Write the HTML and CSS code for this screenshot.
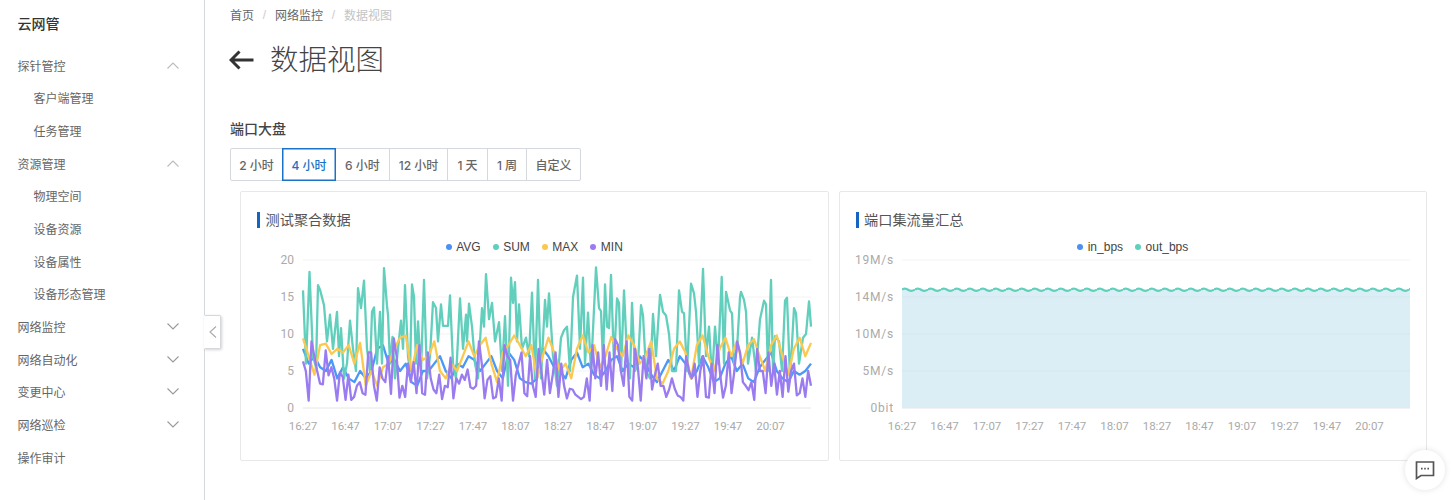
FILE: index.html
```html
<!DOCTYPE html>
<html lang="zh">
<head>
<meta charset="utf-8">
<title>数据视图</title>
<link rel="stylesheet" href="styles.css">
</head>
<body>
<div class="app">
  <aside class="sidebar">
    <div class="brand">云网管</div>
    <nav class="menu">
      <div class="row">探针管控<svg class="chev up" viewBox="0 0 12 7"><path d="M.5 6.5 6 1l5.500 5.500"/></svg></div>
      <div class="row sub">客户端管理</div>
      <div class="row sub">任务管理</div>
      <div class="row">资源管理<svg class="chev up" viewBox="0 0 12 7"><path d="M.5 6.5 6 1l5.500 5.500"/></svg></div>
      <div class="row sub">物理空间</div>
      <div class="row sub">设备资源</div>
      <div class="row sub">设备属性</div>
      <div class="row sub">设备形态管理</div>
      <div class="row">网络监控<svg class="chev" viewBox="0 0 12 7"><path d="M.5.5 6 6l5.500-5.500"/></svg></div>
      <div class="row">网络自动化<svg class="chev" viewBox="0 0 12 7"><path d="M.5.5 6 6l5.500-5.500"/></svg></div>
      <div class="row">变更中心<svg class="chev" viewBox="0 0 12 7"><path d="M.5.5 6 6l5.500-5.500"/></svg></div>
      <div class="row">网络巡检<svg class="chev" viewBox="0 0 12 7"><path d="M.5.5 6 6l5.500-5.500"/></svg></div>
      <div class="row">操作审计</div>
    </nav>
    <div class="collapse"><svg viewBox="0 0 8 12"><path d="M7 .5 1 6l6 5.500"/></svg></div>
  </aside>
  <main class="main">
    <div class="crumbs"><span>首页</span><i>/</i><span>网络监控</span><i>/</i><span class="cur">数据视图</span></div>
    <div class="head">
      <svg class="back" viewBox="0 0 26 20"><path d="M24.500 10H2M10.500 1.500 2 10l8.500 8.500"/></svg>
      <h1>数据视图</h1>
    </div>
    <h2 class="section">端口大盘</h2>
    <div class="btns">
      <button>2 小时</button><button class="on">4 小时</button><button>6 小时</button><button>12 小时</button><button>1 天</button><button>1 周</button><button>自定义</button>
    </div>
    <div class="cards">
      <section class="card">
        <h3 class="card-title">测试聚合数据</h3>
        <div class="legend">
          <span class="lg"><b class="dot blue"></b>AVG</span>
          <span class="lg"><b class="dot teal"></b>SUM</span>
          <span class="lg"><b class="dot gold"></b>MAX</span>
          <span class="lg"><b class="dot violet"></b>MIN</span>
        </div>
        <svg class="chart" viewBox="0 0 586 190">
          <g class="grid"><path d="M62 7H570M62 44H570M62 81H570M62 118H570"/></g>
          <path class="axis" d="M62 155H570"/>
          <g class="ylab">
            <text x="53" y="11">20</text><text x="53" y="48">15</text><text x="53" y="85">10</text><text x="53" y="122">5</text><text x="53" y="159">0</text>
          </g>
          <g class="xlab">
            <text x="62" y="177">16:27</text><text x="104.500" y="177">16:47</text><text x="147" y="177">17:07</text><text x="189.500" y="177">17:27</text><text x="232" y="177">17:47</text><text x="274.500" y="177">18:07</text><text x="317" y="177">18:27</text><text x="359.500" y="177">18:47</text><text x="402" y="177">19:07</text><text x="444.500" y="177">19:27</text><text x="487" y="177">19:47</text><text x="529.500" y="177">20:07</text>
          </g>
          <g transform="translate(62 155) scale(5.708 -7.4)">
            <polyline class="ln l-blue" points="0,8 1,6 2,7 3,5.500 4,5 5,6.500 6,4 7,5.500 8,4 9,3.500 10,5 11,4 12,5 13,8 14,8.500 15,6 16,6.500 17,5 18,6 19,3.500 20,3 21,5 22,5 23,6 24,7 25,5 26,4 27,6 28,5.500 29,7 30,6.500 31,5 32,6 33,7 34,5 35,4 36,7.500 37,6.500 38,4 39,3.500 40,3.300 41,4 42,8 43,7 44,5.500 45,5 46,4 47,6.500 48,7.500 49,5.500 50,6 51,4.500 52,4 53,5 54,6.500 55,7 56,5 57,6 58,5.500 59,7 60,6 61,4.500 62,3.500 63,5 64,6.500 65,5 66,7 67,6 68,4 69,5 70,7 71,5.500 72,3.500 73,4 74,6 75,7 76,5 77,6 78,4 79,3.500 80,5.500 81,6.500 82,7.500 83,5 84,4 85,3.500 86,5 87,4.500 88,5 89,6"/>
            <polyline class="ln l-teal" transform="scale(.1752 1)" points="0,15.900 3,6 6.500,18.400 10,7 13,5.500 15,16.600 17,16 21,13.900 24,9 27,12.600 30,8 34,13 36,7 38,10.800 41,4 44,6 47,11.800 50,8 53,5 55,16.200 58,13.500 61,17.200 64,8 67,5 69,13 71,13.600 74,6 77,13 79,6 81,18.900 84,13.800 85,12.600 87,6 89.500,9.600 92,4 95,8 98,11.800 100,8 102,16.600 105,7 107,5 109,16.700 111,15 113,6 115,11.700 118,5 121,17.300 124,4 127,7 130,14.300 133,13.500 135,9 138,14 140,11.100 145,11.100 147,15.200 150,6 153,4 157,14.800 160,8 163,12.600 164,9 166,14.100 169,11 172,6 175,4 177,9 179,13.500 181,11 183,18.100 186,12 189,14.200 192,9 196,11.600 199,5 202,12.400 205,3 208,17.600 210,14.200 212,17 214,9 216,14 219,8 223,9.500 226,7 229,15.600 232,4 235,17.300 238,4 242,14.600 244,11 246,15.500 250,7 254,3 258,9.500 261,10.500 264,11 267,5 270,15 274,17.900 277,8 280,17.600 282,6 285,12.900 288,5 293,19 296,13.500 298,13.100 300,6 302,16.700 304,11 306,10.800 308,18 311,6 314,14.800 316,14.200 318,5 321,15.900 324,7 327,4 329,14.200 332,5 335,6 338,13.900 340,12.500 343,5 347,4 350,12.700 353,7 357,15.300 360,13 363,12.500 366,10 369,5 373,5 376,15.900 379,13 381,12.800 384,5 388,16.800 391,15.500 393,13 396,6 400,18.800 403,7 406,11 409,4 412,11 415,6 418.700,17.700 421,6 423,15.700 427,13.200 429,12.800 431,6 434,8 437,15 438,15.700 441,14.600 443,13 445,6 449,9.500 453,5 457,12 461,14.500 463,14 465,5 468,17.300 470,5 472,9.700 476,9 479,5 482,14.500 484,14.900 487,4 491,13.500 493,12.800 496,6 500,9.500 503,10 506,14.400 508,11"/>
            <polyline class="ln l-gold" points="0,9.400 1,7 2,4.500 3,8.500 4,8.700 5,7.300 6,8 7,7.500 8,8.500 9,6 10,8.800 11,3 12,5 13,3 14,5.500 15,6 16,8 17,9.500 18,9.800 19,5 20,8.500 21,6.500 22,7 23,9 24,5 25,4 26,6 27,5 28,7 29,9 30,7 31,8.500 32,9.500 33,6 34,3.500 35,7.500 36,8.500 37,9.800 38,8.500 39,7 40,8.500 41,4 42,7 43,9.500 44,7.500 45,5 46,6 47,4 48,8 49,9.800 50,7.500 51,8.500 52,5.500 53,7 54,9.600 55,8 56,7 57,9.800 58,8.500 59,6 60,7 61,9 62,4 63,3.300 64,5 65,8 66,9 67,7.500 68,4 69,8.500 70,9.800 71,7 72,5 73,8 74,9.500 75,7 76,9 77,6 78,8.500 79,9.300 80,7 81,5 82,8.500 83,9.800 84,7 85,4.500 86,8 87,9.500 88,7 89,8.800"/>
          </g>
          <g transform="translate(62 155) scale(2.838 -7.4)">
            <polyline class="ln l-violet" points="0,6.300 1,5 2,1 3,9 4,7 5,5 6,3.300 7,3.200 8,7.800 9,4.400 10,5.500 11,4 12,1 13,4.800 14,4.200 15,1.100 16,4.500 17,1.100 18,1.500 19,3 20,3.500 21,2 22,1.800 23,7.500 24,7.500 25,3 26,1 27,5.500 28,4 29,3.500 30,7 31,1.900 32,9.400 33,7 34,1.400 35,3 36,1.500 37,6 38,3.500 39,6.200 40,2 41,8.500 42,2 43,1.800 44,7.500 45,4 46,2.500 47,2 48,4.500 49,1.200 50,3 51,2.800 52,6.800 53,1.300 54,4 55,3.300 56,4.500 57,3.800 58,5.200 59,2.800 60,2.600 61,3 62,9 63,6 64,1.300 65,3.800 66,4.300 67,1.300 68,1.500 69,4 70,1 71,8.500 72,7 73,6.500 74,1 75,4.500 76,6 77,7.500 78,2 79,1.600 80,7 81,3 82,1.500 83,8 84,5 85,1.800 86,6.500 87,2 88,4.500 89,7.500 90,1.500 91,6 92,3 93,1.300 94,2.600 95,2.500 96,1.800 97,1.500 98,1.200 99,1.500 100,4 101,1 102,8.500 103,4 104,7.500 105,3 106,8.500 107,2.500 108,7.500 109,2.300 110,9.300 111,8.500 112,5 113,3 114,9 115,1.500 116,1 117,8 118,5.500 119,1 120,7 121,4 122,8 123,2.500 124,4.500 125,6 126,3 127,3 128,1.500 129,2.500 130,4 131,2.600 132,1.700 133,1.500 134,1 135,7 136,5 137,4 138,6 139,1.500 140,5 141,7 142,1.500 143,1.400 144,6 145,2 146,8.500 147,4.500 148,1.400 149,3 150,7.500 151,2 152,5 153,9 154,7.500 155,3.500 156,3 157,2.400 158,3.500 159,1.100 160,8 161,5 162,5 163,2 164,7.500 165,3 166,6 167,1.800 168,5 169,1.500 170,7 171,2.200 172,5 173,6 174,1.700 175,2 176,4 177,1.500 178,5 179,3"/>
          </g>
        </svg>
      </section>
      <section class="card">
        <h3 class="card-title">端口集流量汇总</h3>
        <div class="legend">
          <span class="lg"><b class="dot blue"></b>in_bps</span>
          <span class="lg"><b class="dot teal"></b>out_bps</span>
        </div>
        <svg class="chart" viewBox="0 0 586 190">
          <defs>
            <pattern id="wave" width="13" height="6" patternUnits="userSpaceOnUse" x="62" y="34">
              <path class="wave" d="M0 2.500Q3.200 .5 6.500 3 9.800 5 13 2.500"/>
            </pattern>
          </defs>
          <g class="grid"><path d="M62 7H570"/></g>
          <rect class="area" x="62" y="37" width="508" height="118"/>
          <g class="grid on-area"><path d="M62 44H570M62 81H570M62 118H570"/></g>
          <path class="axis" d="M62 155H570"/>
          <rect x="62" y="34" width="508" height="6" fill="url(#wave)"/>
          <g class="ylab wide">
            <text x="54" y="11">19M/s</text><text x="54" y="48">14M/s</text><text x="54" y="85">10M/s</text><text x="54" y="122">5M/s</text><text x="54" y="159">0bit</text>
          </g>
          <g class="xlab">
            <text x="62" y="177">16:27</text><text x="104.500" y="177">16:47</text><text x="147" y="177">17:07</text><text x="189.500" y="177">17:27</text><text x="232" y="177">17:47</text><text x="274.500" y="177">18:07</text><text x="317" y="177">18:27</text><text x="359.500" y="177">18:47</text><text x="402" y="177">19:07</text><text x="444.500" y="177">19:27</text><text x="487" y="177">19:47</text><text x="529.500" y="177">20:07</text>
          </g>
        </svg>
      </section>
    </div>
  </main>
</div>
<div class="fab"><svg viewBox="0 0 20 20"><path d="M1.500 2h17v13.500H6L1.500 18.500z"/><path class="dots" d="M6 8.700h1.600M9.200 8.700h1.600M12.400 8.700H14"/></svg></div>
</body>
</html>
```
FILE: styles.css
```css
* { box-sizing: border-box; }
html, body { margin: 0; height: 500px; overflow: hidden; background: #fff; }
body { font-family: "Liberation Sans", "Noto Sans CJK SC", sans-serif; font-size: 12px; color: #666; }
.app { display: flex; height: 500px; }
.sidebar { position: relative; flex: 0 0 205px; border-right: 1px solid #d5d8dc; }
.brand { height: 49px; padding: 14px 0 0 17.500px; font-size: 14px; line-height: 20px; font-weight: 500; color: #333; }
.row { display: flex; align-items: center; justify-content: space-between; height: 32.650px; padding: 0 25px 0 17.500px; font-size: 12px; color: #666; }
.row.sub { padding-left: 33.500px; }
.chev { width: 12px; height: 7px; fill: none; stroke: #999; stroke-width: 1.100; }
.chev.up { stroke: #bbb; }
.collapse { position: absolute; left: 204px; top: 315px; width: 17px; height: 34px; display: flex; align-items: center; justify-content: center; background: #fff; border: 1px solid #d5d8dc; border-left-color: #fff; border-radius: 0 2px 2px 0; box-shadow: 1px 1px 3px rgba(0,0,0,.18); }
.collapse svg { width: 8px; height: 12px; fill: none; stroke: #aaa; stroke-width: 1.100; }
.main { flex: 1; padding-left: 25px; min-width: 0; }
.crumbs { display: flex; align-items: center; height: 29px; color: #666; }
.crumbs i { font-style: normal; color: #ccc; margin: 0 8.500px; width: 4px; text-align: center; }
.crumbs .cur { color: #c4c4c4; }
.head { display: flex; align-items: center; height: 40px; margin-top: 11px; gap: 15px; }
.back { width: 26px; height: 20px; margin-left: -1px; fill: none; stroke: #333; stroke-width: 3; }
h1 { margin: 0; font-size: 28.500px; line-height: 40px; font-weight: 300; color: #444; }
.section { margin: 39px 0 0; font-size: 14px; line-height: 20px; font-weight: 500; color: #444; }
.btns { display: grid; grid-template-columns: 53px 53px 54px 58px 40px 39px 54px; width: 351px; margin-top: 9px; height: 33px; }
.btns button { width: calc(100% + 1px); padding: 0; height: 33px; margin-left: -1px; background: #fff; border: 1px solid #d5d8dc; font: 500 12px Inter, "Noto Sans CJK SC", sans-serif; color: #666; }
.btns button:first-child { width: 100%; margin-left: 0; border-radius: 2px 0 0 2px; }
.btns button:last-child { border-radius: 0 2px 2px 0; }
.btns button.on { position: relative; border-color: #1a73c4; color: #1a73c4; box-shadow: inset 0 0 0 .5px #1a73c4; }
.cards { display: flex; gap: 10px; margin: 10px 0 0 10px; width: 1187px; }
.card { flex: 1; height: 270px; border: 1px solid #e8e8e8; border-radius: 2px; padding-top: 20px; }
.card-title { margin: 0 0 0 16px; height: 16px; padding-left: 5.500px; border-left: 3px solid #1565c0; font-size: 14.200px; line-height: 16px; font-weight: 400; color: #555; }
.legend { display: flex; justify-content: center; gap: 12px; height: 14px; margin-top: 12px; font-size: 12px; line-height: 14px; color: #444; }
.lg { display: flex; align-items: center; gap: 4.500px; }
.dot { width: 6px; height: 6px; border-radius: 50%; }
.blue { background: #4a90f7; }
.teal { background: #5fd0bc; }
.gold { background: #fbc850; }
.violet { background: #9a7cf0; }
.chart { display: block; width: 586px; height: 190px; margin-top: -1px; }
.grid path { fill: none; stroke: #f3f3f3; stroke-width: 1; }
.grid.on-area path { stroke: #d2e7ef; }
.axis { fill: none; stroke: #e6e6e6; stroke-width: 1; }
.ylab text, .xlab text { font-family: Roboto, sans-serif; font-size: 11.500px; fill: #aaa; }
.ylab text { text-anchor: end; font-size: 12px; }
.ylab.wide text { letter-spacing: .8px; }
.xlab text { text-anchor: middle; }
.ln { fill: none; stroke-width: 2.300; stroke-linejoin: round; vector-effect: non-scaling-stroke; }
.l-blue { stroke: #4a98f7; }
.l-teal { stroke: #62cfbd; }
.l-gold { stroke: #fbc850; }
.l-violet { stroke: #9a7cf0; }
.area { fill: #dbeef6; }
.wave { fill: none; stroke: #5fd0bc; stroke-width: 2.200; }
.fab { position: fixed; left: 1405px; top: 450px; width: 40px; height: 40px; display: flex; align-items: center; justify-content: center; background: #fff; border-radius: 50%; box-shadow: 0 0 6px rgba(0,0,0,.12); }
.fab svg { width: 20px; height: 20px; fill: none; stroke: #555; stroke-width: 1.700; }
.fab .dots { stroke-width: 1.700; }
```
